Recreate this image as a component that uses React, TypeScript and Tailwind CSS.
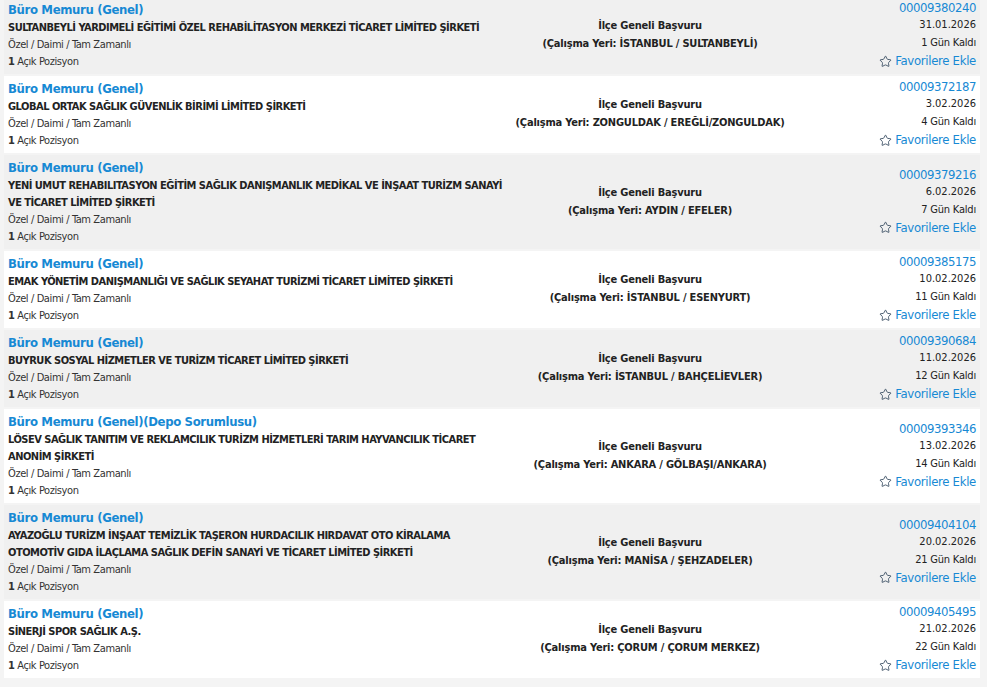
import { Star } from "lucide-react";

interface Job {
  title: string;
  company: string;
  location: string;
  no: string;
  date: string;
  left: string;
}

const jobs: Job[] = [
  {
    title: "Büro Memuru (Genel)",
    company: "SULTANBEYLİ YARDIMELİ EĞİTİMİ ÖZEL REHABİLİTASYON MERKEZİ TİCARET LİMİTED ŞİRKETİ",
    location: "İSTANBUL / SULTANBEYLİ",
    no: "00009380240",
    date: "31.01.2026",
    left: "1 Gün Kaldı",
  },
  {
    title: "Büro Memuru (Genel)",
    company: "GLOBAL ORTAK SAĞLIK GÜVENLİK BİRİMİ LİMİTED ŞİRKETİ",
    location: "ZONGULDAK / EREĞLİ/ZONGULDAK",
    no: "00009372187",
    date: "3.02.2026",
    left: "4 Gün Kaldı",
  },
  {
    title: "Büro Memuru (Genel)",
    company:
      "YENİ UMUT REHABILITASYON EĞİTİM SAĞLIK DANIŞMANLIK MEDİKAL VE İNŞAAT TURİZM SANAYİ VE TİCARET LİMİTED ŞİRKETİ",
    location: "AYDIN / EFELER",
    no: "00009379216",
    date: "6.02.2026",
    left: "7 Gün Kaldı",
  },
  {
    title: "Büro Memuru (Genel)",
    company: "EMAK YÖNETİM DANIŞMANLIĞI VE SAĞLIK SEYAHAT TURİZMİ TİCARET LİMİTED ŞİRKETİ",
    location: "İSTANBUL / ESENYURT",
    no: "00009385175",
    date: "10.02.2026",
    left: "11 Gün Kaldı",
  },
  {
    title: "Büro Memuru (Genel)",
    company: "BUYRUK SOSYAL HİZMETLER VE TURİZM TİCARET LİMİTED ŞİRKETİ",
    location: "İSTANBUL / BAHÇELİEVLER",
    no: "00009390684",
    date: "11.02.2026",
    left: "12 Gün Kaldı",
  },
  {
    title: "Büro Memuru (Genel)(Depo Sorumlusu)",
    company:
      "LÖSEV SAĞLIK TANITIM VE REKLAMCILIK TURİZM HİZMETLERİ TARIM HAYVANCILIK TİCARET ANONİM ŞİRKETİ",
    location: "ANKARA / GÖLBAŞI/ANKARA",
    no: "00009393346",
    date: "13.02.2026",
    left: "14 Gün Kaldı",
  },
  {
    title: "Büro Memuru (Genel)",
    company:
      "AYAZOĞLU TURİZM İNŞAAT TEMİZLİK TAŞERON HURDACILIK HIRDAVAT OTO KİRALAMA OTOMOTİV GIDA İLAÇLAMA SAĞLIK DEFİN SANAYİ VE TİCARET LİMİTED ŞİRKETİ",
    location: "MANİSA / ŞEHZADELER",
    no: "00009404104",
    date: "20.02.2026",
    left: "21 Gün Kaldı",
  },
  {
    title: "Büro Memuru (Genel)",
    company: "SİNERJİ SPOR SAĞLIK A.Ş.",
    location: "ÇORUM / ÇORUM MERKEZ",
    no: "00009405495",
    date: "21.02.2026",
    left: "22 Gün Kaldı",
  },
];

function JobRow({ job, odd }: { job: Job; odd: boolean }) {
  return (
    <div className={`flex pt-[3px] pb-[4px] px-1 ${odd ? "bg-[#f0f0f0]" : "bg-white"}`}>
      {/* sol kolon */}
      <div className="w-[502px] shrink-0 pr-[5px]">
        <div className="text-[13px] leading-[19px] font-bold text-[#1789d4] tracking-[-0.35px]">
          {job.title}
        </div>
        <div className="text-[11px] leading-[17px] font-bold text-[#222] tracking-[-0.5px]">
          {job.company}
        </div>
        <div className="text-[11px] leading-[17px] text-[#333] tracking-[-0.4px]">
          Özel / Daimi / Tam Zamanlı
        </div>
        <div className="text-[11px] leading-[17px] text-[#333] tracking-[-0.4px]">
          <b>1</b> Açık Pozisyon
        </div>
      </div>

      {/* orta kolon */}
      <div className="flex-1 flex flex-col justify-center items-center text-[11px] font-bold text-[#222] leading-[18px] tracking-[-0.2px]">
        <div>İlçe Geneli Başvuru</div>
        <div>(Çalışma Yeri: {job.location})</div>
      </div>

      {/* sağ kolon */}
      <div className="w-[186px] shrink-0 flex flex-col justify-center items-end text-right">
        <div className="text-[13px] leading-[16px] text-[#1789d4] tracking-[-0.45px]">{job.no}</div>
        <div className="text-[11px] leading-[18px] text-[#222]">{job.date}</div>
        <div className="text-[11px] leading-[18px] text-[#222] tracking-[-0.2px]">{job.left}</div>
        <div className="text-[13px] leading-[18px] text-[#1789d4] flex items-center gap-[3px] tracking-[-0.3px]">
          <Star size={13} strokeWidth={1.6} className="text-[#34495e]" />
          Favorilere Ekle
        </div>
      </div>
    </div>
  );
}

export default function App() {
  return (
    <div
      className="w-[987px] h-[687px] overflow-hidden bg-[#f4f4f4]"
      style={{ fontFamily: '"DejaVu Sans Condensed", Tahoma, "DejaVu Sans", sans-serif' }}
    >
      <div className="ml-1 mr-[7px] -mt-[3px] flex flex-col gap-[2px]">
        {jobs.map((j, i) => (
          <JobRow key={j.no} job={j} odd={i % 2 === 0} />
        ))}
      </div>
    </div>
  );
}
